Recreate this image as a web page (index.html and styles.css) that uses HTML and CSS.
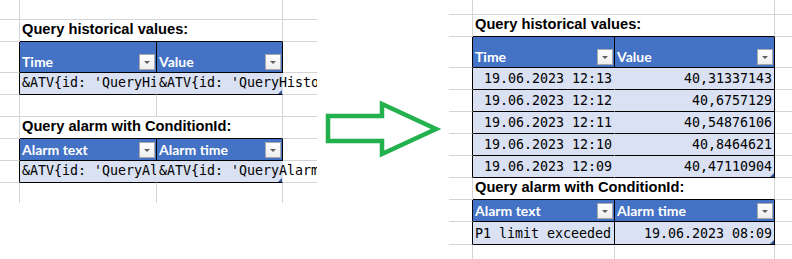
FILE: index.html
```html
<!DOCTYPE html>
<html lang="en">
<head>
<meta charset="utf-8">
<title>Query historical values</title>
<link rel="stylesheet" href="styles.css">
</head>
<body>
<div class="page">
  <div class="sheet sheet-left">
    <div class="c c0"></div><div class="c span2"></div><div class="c c3"></div>

    <div class="c c0"></div><div class="c span2 title">Query historical values:</div><div class="c c3"></div>

    <div class="c c0 bk-r"></div>
    <div class="c th"><span class="th-label">Time</span><span class="dd"></span></div>
    <div class="c th"><span class="th-label">Value</span><span class="dd"></span></div>
    <div class="c c3"></div>

    <div class="c c0 bk-r"></div>
    <div class="c td clip nodiv">&amp;ATV{id: 'QueryHi</div>
    <div class="c td over nodiv handle">&amp;ATV{id: 'QueryHisto</div>
    <div class="c c3"></div>

    <div class="c c0"></div><div class="c"></div><div class="c"></div><div class="c c3"></div>

    <div class="c c0"></div><div class="c span2 title">Query alarm with ConditionId:</div><div class="c c3"></div>

    <div class="c c0 bk-r"></div>
    <div class="c th"><span class="th-label">Alarm text</span><span class="dd"></span></div>
    <div class="c th"><span class="th-label">Alarm time</span><span class="dd"></span></div>
    <div class="c c3"></div>

    <div class="c c0 bk-r"></div>
    <div class="c td clip nodiv">&amp;ATV{id: 'QueryAl</div>
    <div class="c td over nodiv handle">&amp;ATV{id: 'QueryAlarm</div>
    <div class="c c3"></div>

    <div class="c c0 nb"></div><div class="c nb"></div><div class="c nb"></div><div class="c c3 nb"></div>
  </div>

  <div class="arrow-area">
    <svg class="arrow" width="132" height="259" viewBox="0 0 132 259" aria-hidden="true">
      <polygon points="11,116 65,116 65,104 119,129 65,154 65,141 11,141" fill="none" stroke="#22b14c" stroke-width="4.5" stroke-linejoin="miter"/>
    </svg>
  </div>

  <div class="sheet sheet-right">
    <div class="c c0"></div><div class="c span2"></div><div class="c c3"></div>

    <div class="c c0"></div><div class="c span2 title">Query historical values:</div><div class="c c3"></div>

    <div class="c c0 bk-r"></div>
    <div class="c th"><span class="th-label">Time</span><span class="dd"></span></div>
    <div class="c th"><span class="th-label">Value</span><span class="dd"></span></div>
    <div class="c c3"></div>

    <div class="c c0 bk-r"></div><div class="c td r nodiv">19.06.2023 12:13</div><div class="c td r">40,31337143</div><div class="c c3"></div>
    <div class="c c0 bk-r"></div><div class="c td r nodiv">19.06.2023 12:12</div><div class="c td r">40,6757129</div><div class="c c3"></div>
    <div class="c c0 bk-r"></div><div class="c td r nodiv">19.06.2023 12:11</div><div class="c td r">40,54876106</div><div class="c c3"></div>
    <div class="c c0 bk-r"></div><div class="c td r nodiv">19.06.2023 12:10</div><div class="c td r">40,8464621</div><div class="c c3"></div>
    <div class="c c0 bk-r"></div><div class="c td r nodiv">19.06.2023 12:09</div><div class="c td r handle">40,47110904</div><div class="c c3"></div>

    <div class="c c0"></div><div class="c span2 title">Query alarm with ConditionId:</div><div class="c c3"></div>

    <div class="c c0 bk-r"></div>
    <div class="c th"><span class="th-label">Alarm text</span><span class="dd"></span></div>
    <div class="c th"><span class="th-label">Alarm time</span><span class="dd"></span></div>
    <div class="c c3"></div>

    <div class="c c0 bk-r"></div><div class="c td">P1 limit exceeded</div><div class="c td r handle">19.06.2023 08:09</div><div class="c c3"></div>

    <div class="c c0 nb"></div><div class="c nb"></div><div class="c nb"></div><div class="c c3 nb"></div>
  </div>
</div>
</body>
</html>
```

FILE: styles.css
```css
html, body {
  margin: 0;
  padding: 0;
  background: #ffffff;
}

.page {
  display: flex;
  align-items: flex-start;
  width: 792px;
  height: 259px;
  overflow: hidden;
}

.sheet {
  display: grid;
  flex: none;
  overflow: hidden;
}

.sheet-left {
  width: 317px;
  height: 203px;
  grid-template-columns: 20px 137px 126px 34px;
  grid-template-rows: 20px 22px 31px 22px 22px 22px 22px 22px 20px;
}

.sheet-right {
  width: 343px;
  height: 259px;
  grid-template-columns: 24px 142px 160px 17px;
  grid-template-rows: 15px 22px 31px 22px 22px 22px 22px 22px 22px 22px 23px 14px;
}

.arrow-area {
  flex: none;
  width: 132px;
  height: 259px;
}

.arrow {
  display: block;
}

.c {
  box-sizing: border-box;
  min-width: 0;
  border-right: 1px solid #d4d4d4;
  border-bottom: 1px solid #d4d4d4;
}

.c3 {
  border-right: none;
}

.nb {
  border-bottom: none;
}

.span2 {
  grid-column: span 2;
}

.bk-r {
  border-right-color: #000000;
}

.title {
  font-family: "Liberation Sans", Arial, sans-serif;
  font-weight: bold;
  font-size: 14.67px;
  line-height: 19px;
  padding-left: 2px;
  white-space: nowrap;
  color: #000000;
  border-bottom-color: #000000;
}

.th {
  background: #4472c4;
  border-right-color: #000000;
  border-bottom-color: #000000;
  display: flex;
  align-items: flex-end;
  justify-content: space-between;
  color: #ffffff;
  font-family: Lato, "Noto Sans", sans-serif;
  font-weight: bold;
  font-size: 14px;
}

.th-label {
  line-height: 17px;
  padding: 0 0 2px 2px;
  white-space: nowrap;
}

.dd {
  flex: none;
  box-sizing: border-box;
  width: 16px;
  height: 16px;
  margin: 0 1px 2px 0;
  border: 1px solid #a9a9a9;
  background: linear-gradient(#ffffff, #ededed);
  display: flex;
  align-items: center;
  justify-content: center;
}

.dd::after {
  content: "";
  margin-top: 1px;
  border-left: 3px solid transparent;
  border-right: 3px solid transparent;
  border-top: 3px solid #5f5f5f;
}

.td {
  background: #d9e1f2;
  border-right-color: #000000;
  border-bottom-color: #000000;
  display: flex;
  align-items: flex-end;
  padding: 0 2px 2px 2px;
  font-family: "DejaVu Sans Mono", "Liberation Mono", monospace;
  font-size: 13.3px;
  line-height: 16px;
  white-space: nowrap;
  color: #000000;
}

.sheet-left .td {
  padding-bottom: 3px;
}

.td.r {
  justify-content: flex-end;
}

.td.nodiv {
  border-right-color: #d9e1f2;
}

.td.clip {
  overflow: hidden;
}

.td.over {
  overflow: visible;
}

.handle {
  position: relative;
}

.handle::after {
  content: "";
  position: absolute;
  right: 0;
  bottom: 0;
  border-left: 4px solid transparent;
  border-bottom: 4px solid #2f5597;
}
```
